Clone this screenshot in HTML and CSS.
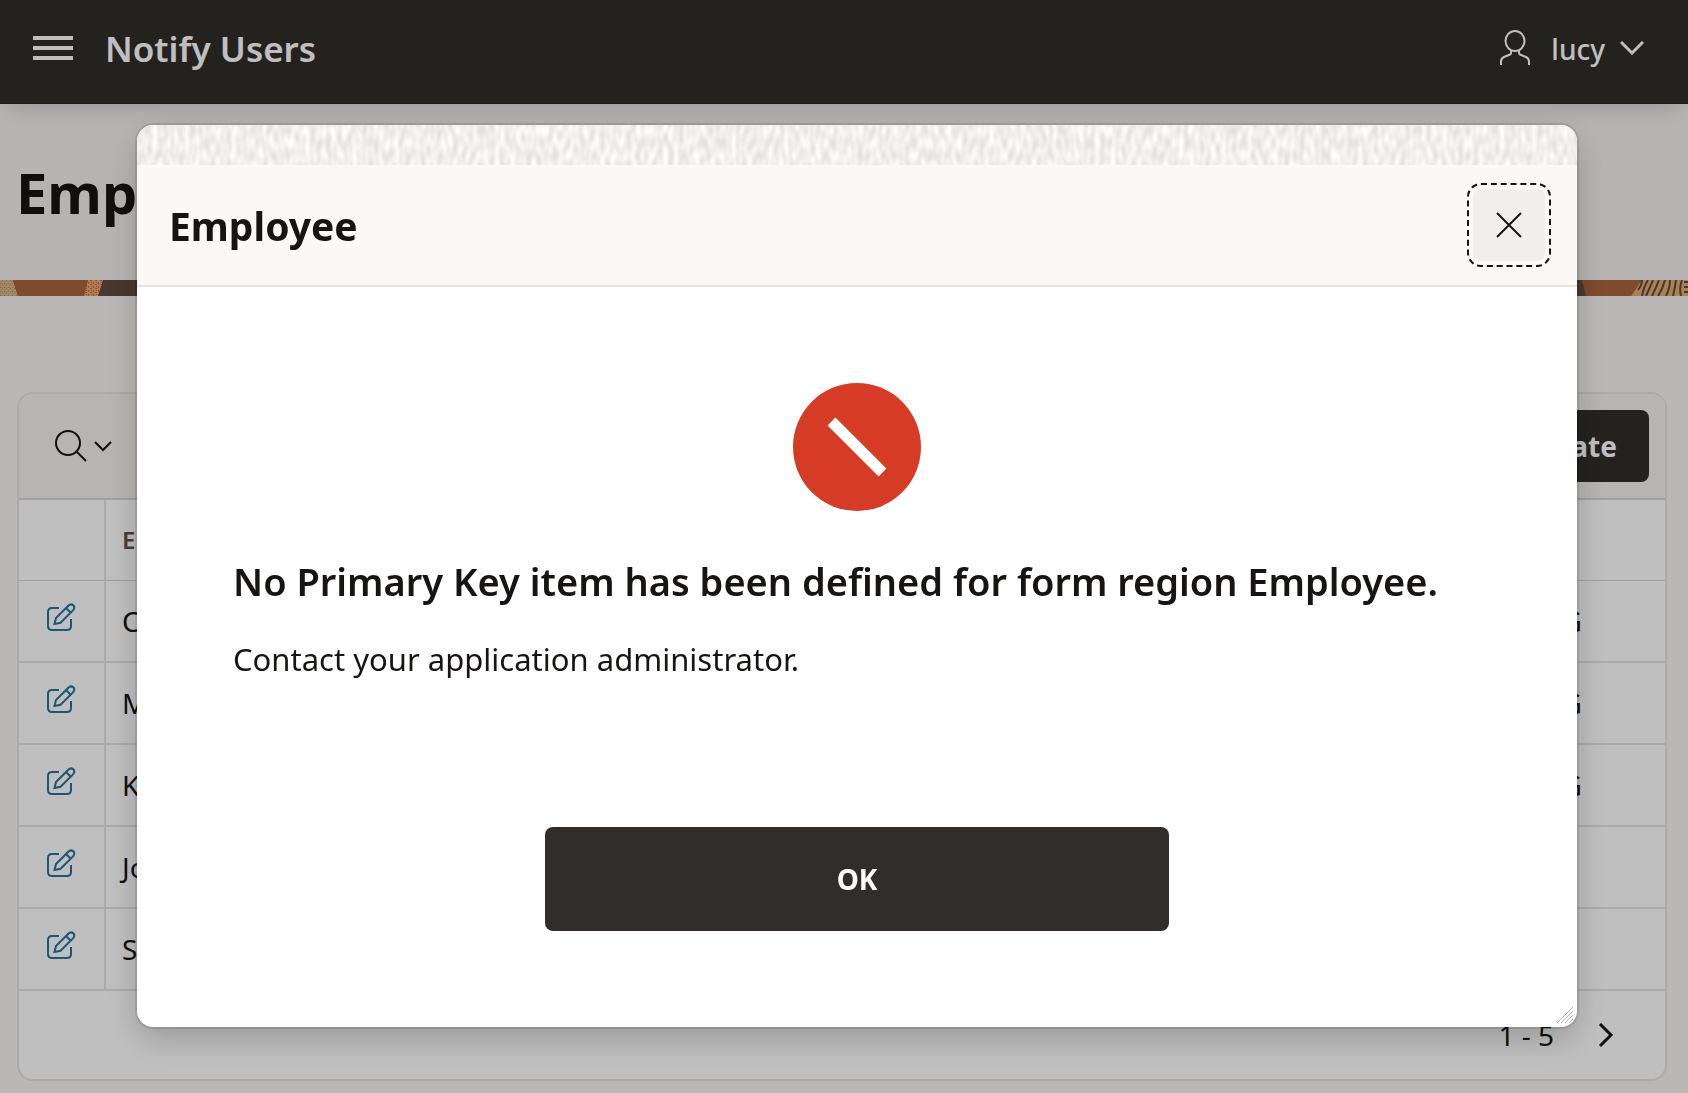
FILE: index.html
```html
<!DOCTYPE html>
<html lang="en">
<head>
<meta charset="utf-8">
<meta name="viewport" content="width=device-width, initial-scale=1">
<title>Notify Users</title>
<link rel="stylesheet" href="styles.css">
</head>
<body>
<svg class="sprite" aria-hidden="true">
  <symbol id="edit" viewBox="0 0 32 32">
    <path d="M15 7H8Q4 7 4 11V25Q4 29 8 29H23Q27 29 27 25V18"/>
    <path d="M10.500 23L12 17L24.300 4.700Q26.800 2.200 29.300 4.300Q31.500 6.700 29 9.400L16.500 21.800ZM22 7L26.700 11.700"/>
  </symbol>
</svg>

<header class="topbar">
  <button class="icon-button menu" aria-label="Main navigation">
    <svg width="40" height="24" viewBox="0 0 40 24"><path d="M0 2H40M0 12H40M0 22H40" stroke-width="4"/></svg>
  </button>
  <a class="brand" href="#">Notify Users</a>
  <button class="user">
    <svg width="32" height="36" viewBox="0 0 32 36"><ellipse cx="16" cy="11" rx="9.500" ry="10"/><path d="M12 20V23Q12 24 11 24.500L5 27Q2 28.500 2 31.500V35M20 20V23Q20 24 21 24.500L27 27Q30 28.500 30 31.500V35"/></svg>
    <span>lucy</span>
    <svg class="caret" width="24" height="14" viewBox="0 0 24 14"><path d="M1 1L12 12L23 1"/></svg>
  </button>
</header>

<main>
  <div class="page-title"><h1>Employees</h1></div>
  <div class="banner" aria-hidden="true">
    <svg width="120" height="16" viewBox="0 0 120 16">
      <defs>
        <pattern id="weave" width="4" height="4" patternUnits="userSpaceOnUse"><rect width="4" height="4" fill="#e0ad70"/><path d="M0 0h2v1h-2zM2 2h2v1h-2z" fill="#bcc4c4"/><path d="M2 0h1v1h-1zM0 3h1v1h-1z" fill="#c08c60"/></pattern>
        <pattern id="dots" width="5" height="4" patternUnits="userSpaceOnUse"><rect width="5" height="4" fill="#e0ad70"/><path d="M0 0h2v1h-2zM3 2h1v2h-1zM1 2h1v1h-1z" fill="#f0563c"/></pattern>
      </defs>
      <path d="M0 0H13L18 16H0Z" fill="url(#weave)"/>
      <path d="M13 0H88L84 16H18Z" fill="#a9643b"/>
      <path d="M88 0H103L98 16H84Z" fill="url(#dots)"/>
    </svg>
    <svg width="112" height="16" viewBox="0 0 112 16">
      <path d="M6 0H66L55 16H10Z" fill="#a9643b"/>
      <path d="M66 0H112V16H55Z" fill="#e0ad70"/>
      <path d="M66 0Q66 5 62 10M72 0Q68 6 66 16M77 0Q74 7 70 16M83 0Q80 8 76 16M89 0Q87 8 82 16M94 0Q94 8 90 16M100 0Q99 8 97 16M106 0Q103 8 105 16M108 2H112M108 7H112M108 12H112" stroke="#604b3f" stroke-width="2"/>
    </svg>
  </div>

  <section class="report" aria-label="Employees report">
    <div class="toolbar">
      <button class="icon-button search" aria-label="Select columns to search">
        <svg width="34" height="34" viewBox="0 0 34 34"><circle cx="14" cy="14" r="12"/><path d="M22 22L32 32"/></svg>
        <svg width="18" height="12" viewBox="0 0 18 12"><path d="M1 2L9 10L17 2"/></svg>
      </button>
      <button class="create">Create</button>
    </div>
    <table>
      <colgroup><col class="col-edit"><col><col class="col-dept"></colgroup>
      <thead><tr><th></th><th>Ename</th><th>Dname</th></tr></thead>
      <tbody>
        <tr><td><a href="#" aria-label="Edit"><svg width="32" height="32"><use href="#edit"/></svg></a></td><td>Clark</td><td>ACCOUNTING</td></tr>
        <tr><td><a href="#" aria-label="Edit"><svg width="32" height="32"><use href="#edit"/></svg></a></td><td>Miller</td><td>ACCOUNTING</td></tr>
        <tr><td><a href="#" aria-label="Edit"><svg width="32" height="32"><use href="#edit"/></svg></a></td><td>King</td><td>ACCOUNTING</td></tr>
        <tr><td><a href="#" aria-label="Edit"><svg width="32" height="32"><use href="#edit"/></svg></a></td><td>Jones</td><td>RESEARCH</td></tr>
        <tr><td><a href="#" aria-label="Edit"><svg width="32" height="32"><use href="#edit"/></svg></a></td><td>Scott</td><td>RESEARCH</td></tr>
      </tbody>
    </table>
    <div class="pagination">
      <span>1 - 5</span>
      <button class="icon-button" aria-label="Next"><svg width="16" height="24" viewBox="0 0 16 24"><path d="M2 1L13 12L2 23"/></svg></button>
    </div>
  </section>
</main>

<div class="overlay">
  <div class="dialog" role="dialog" aria-modal="true" aria-labelledby="dialog-title">
    <svg class="texture" aria-hidden="true">
      <filter id="knit" x="0" y="0" width="100%" height="100%" color-interpolation-filters="sRGB">
        <feTurbulence type="fractalNoise" baseFrequency="0.19 0.08" numOctaves="1" seed="4"/>
        <feColorMatrix values="0.22 0 0 0 0.835  0.22 0 0 0 0.83  0.22 0 0 0 0.825  0 0 0 0 1"/>
      </filter>
      <rect width="100%" height="100%" filter="url(#knit)"/>
    </svg>
    <div class="dialog-head">
      <h2 id="dialog-title">Employee</h2>
      <button class="close" aria-label="Close"><svg width="26" height="26" viewBox="0 0 26 26"><path d="M1 1L25 25M25 1L1 25"/></svg></button>
    </div>
    <div class="dialog-body">
      <svg class="stop" width="128" height="128" viewBox="0 0 128 128"><circle cx="64" cy="64" r="64" fill="#d63b25" stroke="none"/><path d="M38.500 38.500L89.500 89.500" stroke="#fff" stroke-width="11"/></svg>
      <h3>No Primary Key item has been defined for form region Employee.</h3>
      <p>Contact your application administrator.</p>
      <button class="ok">OK</button>
    </div>
    <svg class="grip" width="16" height="16" viewBox="0 0 16 16" aria-hidden="true"><path d="M0 16L16 0M4 16L16 4M8 16L16 8M12 16L16 12"/></svg>
  </div>
</div>
</body>
</html>
```
FILE: styles.css
```css
* { box-sizing: border-box; }

body {
  margin: 0;
  min-height: 100vh;
  overflow: hidden;
  background: #f8f6f3;
  color: #161513;
  font: 28px/40px "Noto Sans", "Open Sans", sans-serif;
}

h1, h2, h3, p { margin: 0; }
a { color: inherit; text-decoration: none; }
button { font: inherit; color: inherit; border: 0; cursor: pointer; }
svg { display: block; fill: none; stroke: currentColor; stroke-width: 2; flex: none; }
.sprite { display: none; }
.icon-button { padding: 0; background: none; }

.topbar {
  position: relative;
  display: flex;
  align-items: center;
  height: 104px;
  padding: 0 44px 8px 33px;
  background: #312e29;
  border-bottom: 1px solid #2c2327;
  color: #fff;
  box-shadow: 0 12px 20px -8px rgba(0, 0, 0, .16);
}
.brand { margin-left: 32px; padding-top: 2px; font-size: 35px; font-weight: 600; }
.user { display: flex; align-items: center; margin-left: auto; padding: 0; background: none; font-weight: 500; }
.user span { margin-left: 20px; padding-top: 2px; }
.user .caret { margin-left: 15px; stroke-width: 3; }

.page-title {
  display: flex;
  align-items: center;
  height: 176px;
  padding: 0 16px;
  background: #f3f1ef;
}
h1 { font-size: 56px; line-height: 72px; font-weight: 700; }

.banner { display: flex; justify-content: space-between; height: 16px; background: #604b3f; }
.banner svg { stroke: none; }

.report {
  margin: 96px 21px 0 17px;
  border: 2px solid #e6e4e3;
  border-radius: 16px;
  background: #fff;
  overflow: hidden;
}
.toolbar {
  display: flex;
  align-items: center;
  justify-content: space-between;
  height: 106px;
  padding: 0 16px 0 35px;
  background: #f4f2ef;
  border-bottom: 2px solid #d8d6d4;
}
.search { display: flex; align-items: center; gap: 6px; }
.create {
  height: 72px;
  padding: 0 32px;
  border-radius: 8px;
  background: #312e29;
  color: #fff;
  font-weight: 700;
}

table { width: 100%; table-layout: fixed; border-collapse: separate; border-spacing: 0; }
.col-edit { width: 87px; }
.col-dept { width: 281px; }
th, td { height: 82px; padding: 0 16px; border-bottom: 2px solid #e6e4e3; text-align: left; font-weight: 400; }
th { height: 81px; border-bottom: 1px solid #d8d6d4; color: #665045; font-size: 24px; font-weight: 600; }
th:first-child, td:first-child { padding: 0 25px; border-right: 2px solid #e6e4e3; color: #22749c; }
td a { display: block; padding-bottom: 8px; }

.pagination { display: flex; align-items: center; justify-content: flex-end; gap: 44px; height: 88px; padding-right: 51px; }
.pagination svg { stroke-width: 3; }

.overlay {
  position: fixed;
  inset: 0;
  padding: 125px 111px 0 137px;
  background: rgba(0, 0, 0, .25);
}
.dialog {
  position: relative;
  border-radius: 16px;
  background: #fff;
  box-shadow: 0 0 0 2px rgba(0, 0, 0, .1), 0 12px 32px rgba(0, 0, 0, .2);
  overflow: hidden;
}
.texture { width: 100%; height: 40px; stroke: none; }
.dialog-head {
  display: flex;
  align-items: center;
  justify-content: space-between;
  height: 122px;
  padding: 0 32px;
  background: #fbf9f8;
  border-bottom: 2px solid #e6e4e3;
}
h2 { padding-top: 2px; font-size: 39px; line-height: 56px; font-weight: 700; }
.close {
  display: grid;
  place-items: center;
  width: 72px;
  height: 72px;
  padding: 0;
  border-radius: 8px;
  background: #f1efed;
  outline: 2px dashed #161513;
  outline-offset: 4px;
}
.dialog-body { padding: 96px; }
.stop { margin: 0 auto 40px; }
h3 { font-size: 38px; line-height: 60px; font-weight: 600; }
p { margin: 16px 0 136px; font-size: 31px; line-height: 64px; }
.ok {
  display: block;
  width: 50%;
  height: 104px;
  margin: 0 auto;
  border-radius: 8px;
  background: #312d2a;
  color: #fff;
  font-weight: 700;
}
.grip { position: absolute; right: 4px; bottom: 4px; color: #b0b0b0; stroke-width: 1; }
```
